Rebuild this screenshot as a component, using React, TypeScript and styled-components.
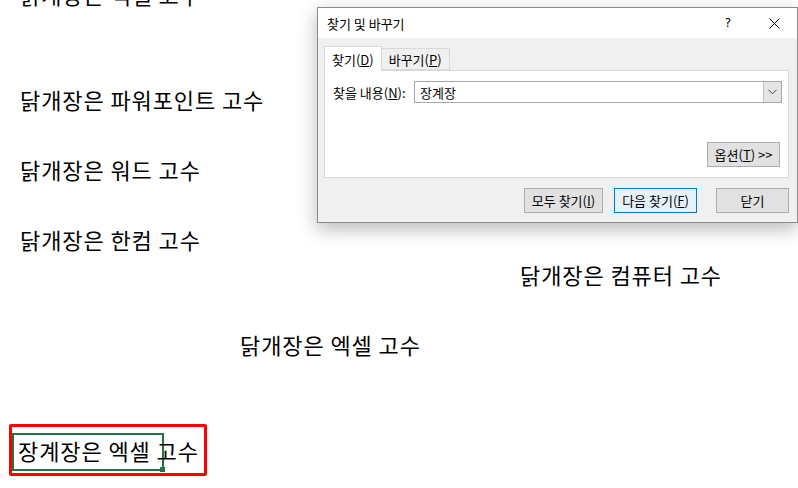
import React from "react";
import styled, { createGlobalStyle } from "styled-components";

const GlobalStyle = createGlobalStyle`
  html, body {
    margin: 0;
    padding: 0;
    background: #fff;
    overflow: hidden;
  }
`;

const Page = styled.div`
  position: relative;
  width: 798px;
  height: 488px;
  overflow: hidden;
  background: #fff;
  font-family: "Noto Sans CJK KR", "Noto Sans", sans-serif;
`;

const Sheet = styled.div`
  display: flex;
  flex-direction: column;
  margin-top: -24px;
`;

const Row = styled.div<{ indent: number }>`
  display: flex;
  align-items: center;
  height: 35px;
  padding-left: ${(p) => p.indent}px;
  box-sizing: border-box;
`;

const CellText = styled.span`
  font-size: 22px;
  letter-spacing: 0.9px;
  line-height: 1;
  color: #000;
  white-space: nowrap;
`;

const RedMark = styled.div`
  display: flex;
  align-items: flex-start;
  box-sizing: border-box;
  width: 198px;
  height: 52px;
  padding-top: 6px;
  border: 3px solid #ff0000;
  border-radius: 2px;
  margin-top: 2px;
`;

const ActiveCell = styled.div`
  position: relative;
  display: flex;
  align-items: center;
  box-sizing: border-box;
  width: 152px;
  height: 38px;
  padding-left: 4px;
  padding-bottom: 3px;
  border: 2px solid #217346;
  &::after {
    content: "";
    position: absolute;
    right: -3px;
    bottom: -3px;
    width: 5px;
    height: 5px;
    background: #217346;
  }
`;

/* dialog */

const Dialog = styled.div`
  position: absolute;
  left: 317px;
  top: 7px;
  width: 481px;
  height: 216px;
  box-sizing: border-box;
  border: 1px solid #8a8a8a;
  background: #f0f0f0;
  box-shadow: 0 6px 18px rgba(0, 0, 0, 0.28);
  display: flex;
  flex-direction: column;
  font-size: 13px;
  color: #000;
`;

const TitleBar = styled.div`
  display: flex;
  align-items: center;
  height: 30px;
  background: #fff;
  padding-left: 9px;
  flex-shrink: 0;
`;

const Title = styled.span`
  flex: 1;
  padding-top: 1px;
`;

const CaptionButton = styled.div`
  width: 46px;
  height: 30px;
  display: flex;
  align-items: center;
  justify-content: center;
  font-family: "DejaVu Sans", sans-serif;
  font-size: 12px;
`;

const Body = styled.div`
  flex: 1;
  display: flex;
  flex-direction: column;
  padding: 8px 8px 0 6px;
`;

const TabStrip = styled.div`
  display: flex;
  align-items: flex-end;
  height: 24px;
  position: relative;
  z-index: 1;
`;

const Tab = styled.div<{ active?: boolean }>`
  box-sizing: border-box;
  height: ${(p) => (p.active ? 25 : 22)}px;
  padding: 0 7px;
  display: flex;
  align-items: center;
  background: ${(p) => (p.active ? "#fff" : "#f0f0f0")};
  border: 1px solid #d9d9d9;
  border-bottom: ${(p) => (p.active ? "none" : "1px solid #d9d9d9")};
  margin-bottom: ${(p) => (p.active ? -1 : 0)}px;
  margin-left: ${(p) => (p.active ? 0 : -1)}px;
`;

const Panel = styled.div`
  box-sizing: border-box;
  height: 108px;
  background: #fff;
  border: 1px solid #d9d9d9;
  display: flex;
  flex-direction: column;
  padding: 10px 6px 10px 8px;
`;

const FieldRow = styled.div`
  display: flex;
  align-items: center;
  gap: 8px;
`;

const Label = styled.span`
  width: 73px;
  white-space: nowrap;
`;

const Combo = styled.div`
  flex: 1;
  height: 22px;
  box-sizing: border-box;
  border: 1px solid #a6a6a6;
  display: flex;
  align-items: stretch;
`;

const ComboText = styled.span`
  flex: 1;
  padding-left: 5px;
  display: flex;
  align-items: center;
`;

const ComboButton = styled.div`
  width: 17px;
  background: #e5e5e5;
  border-left: 1px solid #c4c4c4;
  display: flex;
  align-items: center;
  justify-content: center;
`;

const PanelFooter = styled.div`
  margin-top: auto;
  display: flex;
  justify-content: flex-end;
  padding-right: 2px;
`;

const Button = styled.div<{ width: number; primary?: boolean }>`
  box-sizing: border-box;
  width: ${(p) => p.width}px;
  height: 25px;
  display: flex;
  align-items: center;
  justify-content: center;
  white-space: nowrap;
  background: ${(p) => (p.primary ? "#e5f1fb" : "#e1e1e1")};
  border: 1px solid ${(p) => (p.primary ? "#0078d7" : "#adadad")};
`;

const ButtonBar = styled.div`
  display: flex;
  justify-content: flex-end;
  align-items: center;
  margin-top: 10px;
`;

const Gap = styled.div<{ size: number }>`
  width: ${(p) => p.size}px;
`;

const Key = styled.u`
  text-underline-offset: 1px;
`;

const Chevron = () => (
  <svg width="9" height="6" viewBox="0 0 9 6">
    <path d="M0.5 0.8 L4.5 4.8 L8.5 0.8" fill="none" stroke="#444" strokeWidth="1" />
  </svg>
);

const CloseIcon = () => (
  <svg width="11" height="11" viewBox="0 0 11 11">
    <path d="M0.5 0.5 L10.5 10.5 M10.5 0.5 L0.5 10.5" stroke="#000" strokeWidth="1" />
  </svg>
);

const rows: { indent: number; text?: string; active?: boolean }[] = [
  { indent: 20, text: "닭개장은 엑셀 고수" },
  { indent: 20 },
  { indent: 20 },
  { indent: 20, text: "닭개장은 파워포인트 고수" },
  { indent: 20 },
  { indent: 20, text: "닭개장은 워드 고수" },
  { indent: 20 },
  { indent: 20, text: "닭개장은 한컴 고수" },
  { indent: 520, text: "닭개장은 컴퓨터 고수" },
  { indent: 20 },
  { indent: 240, text: "닭개장은 엑셀 고수" },
  { indent: 20 },
  { indent: 20 },
  { indent: 9, text: "장계장은 엑셀 고수", active: true },
];

const App = () => {
  return (
    <>
      <GlobalStyle />
      <Page>
        <Sheet>
          {rows.map((r, i) => (
            <Row key={i} indent={r.indent}>
              {r.active ? (
                <RedMark>
                  <ActiveCell>
                    <CellText>{r.text}</CellText>
                  </ActiveCell>
                </RedMark>
              ) : (
                r.text && <CellText>{r.text}</CellText>
              )}
            </Row>
          ))}
        </Sheet>

        <Dialog>
          <TitleBar>
            <Title>찾기 및 바꾸기</Title>
            <CaptionButton>?</CaptionButton>
            <CaptionButton>
              <CloseIcon />
            </CaptionButton>
          </TitleBar>
          <Body>
            <TabStrip>
              <Tab active>
                찾기(<Key>D</Key>)
              </Tab>
              <Tab>
                바꾸기(<Key>P</Key>)
              </Tab>
            </TabStrip>
            <Panel>
              <FieldRow>
                <Label>
                  찾을 내용(<Key>N</Key>):
                </Label>
                <Combo>
                  <ComboText>장계장</ComboText>
                  <ComboButton>
                    <Chevron />
                  </ComboButton>
                </Combo>
              </FieldRow>
              <PanelFooter>
                <Button width={73}>
                  옵션(<Key>T</Key>) &gt;&gt;
                </Button>
              </PanelFooter>
            </Panel>
            <ButtonBar>
              <Button width={79}>
                모두 찾기(<Key>I</Key>)
              </Button>
              <Gap size={11} />
              <Button width={83} primary>
                다음 찾기(<Key>F</Key>)
              </Button>
              <Gap size={19} />
              <Button width={73}>닫기</Button>
            </ButtonBar>
          </Body>
        </Dialog>
      </Page>
    </>
  );
};

export default App;
